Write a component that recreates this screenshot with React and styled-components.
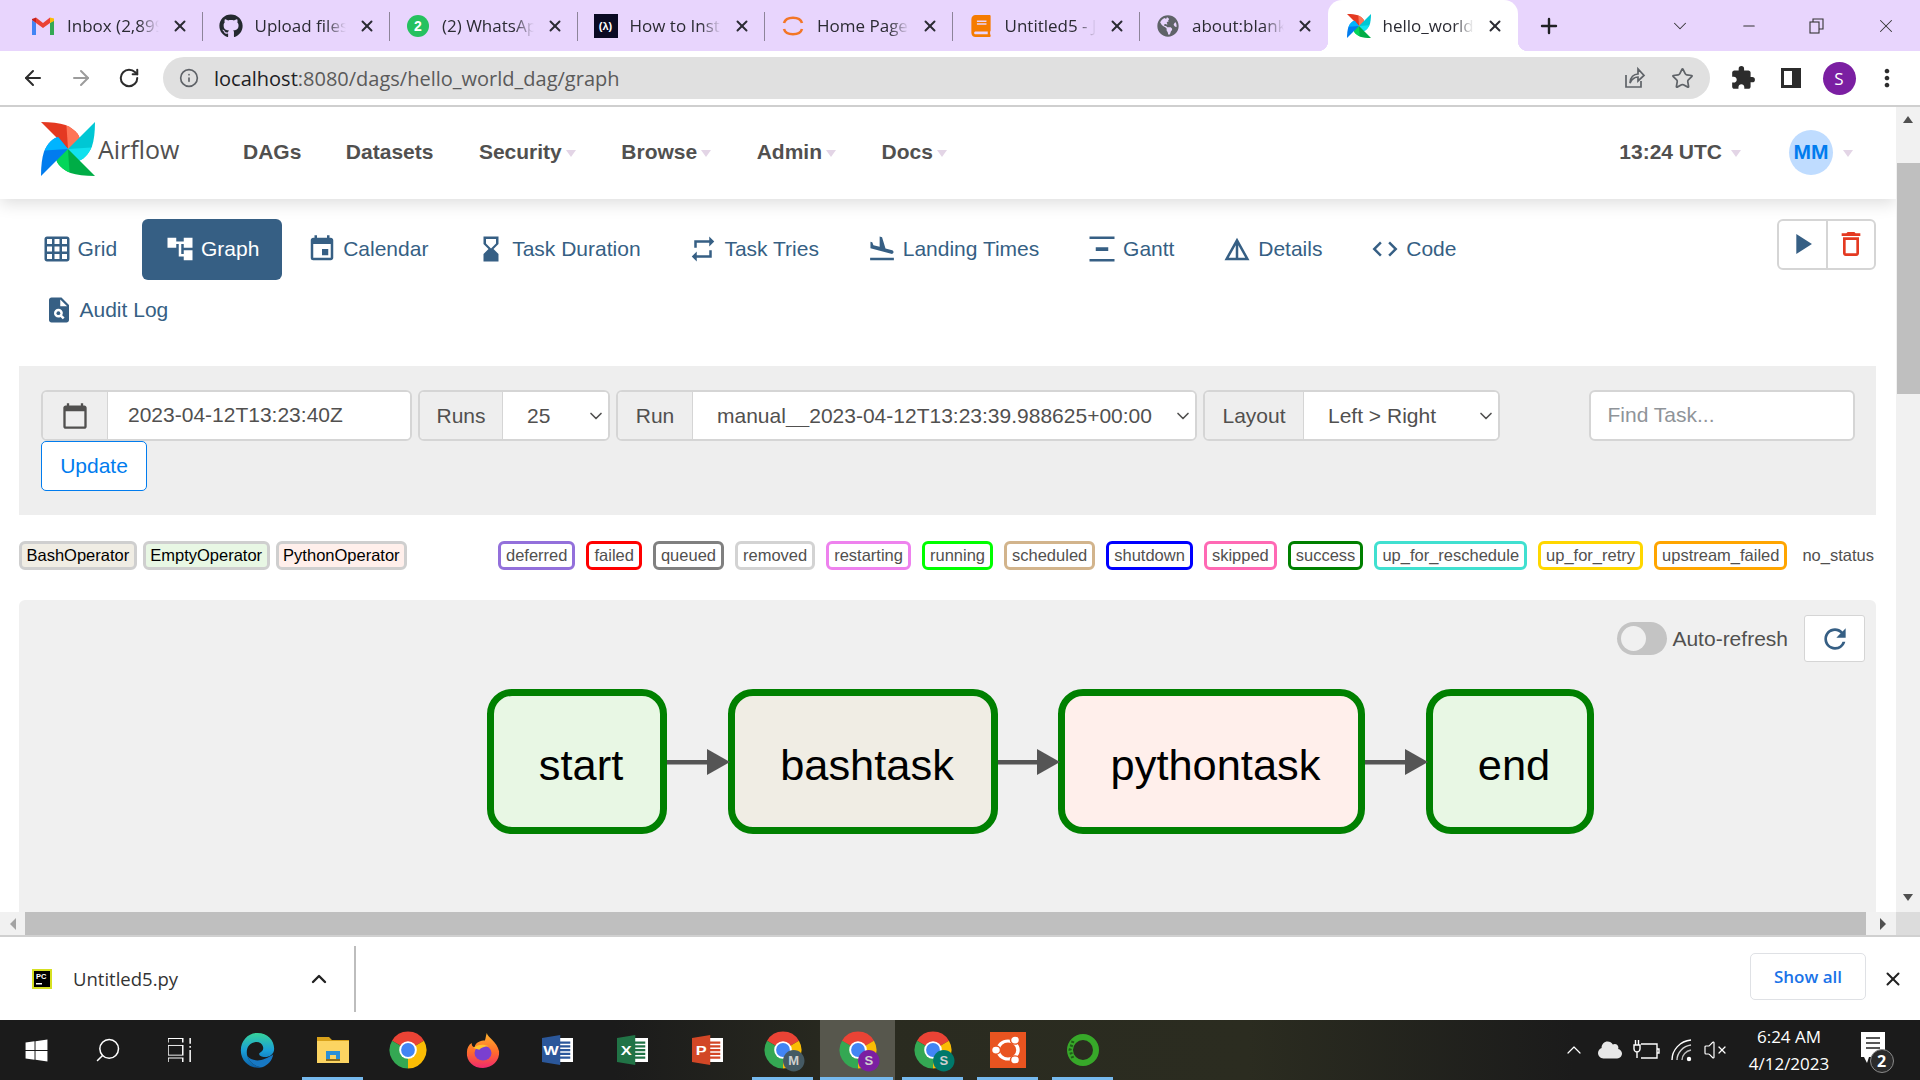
import React from 'react'
import styled, { createGlobalStyle } from 'styled-components'
import { ArrowLeft, ArrowRight, RotateCw, Info, Star, X, Plus, ChevronDown, ChevronUp, Minus, Search, VolumeX } from 'lucide-react'
import {
  MdGridOn, MdAccountTree, MdEvent, MdHourglassBottom, MdRepeat, MdFlightLand, MdVerticalDistribute,
  MdDetails, MdCode, MdPlagiarism, MdPlayArrow, MdDeleteOutline, MdRefresh, MdExtension, MdMoreVert, MdCalendarToday,
} from 'react-icons/md'
import { FaGithub, FaGlobeAmericas, FaWindows, FaBook, FaCloud } from 'react-icons/fa'

const Global = createGlobalStyle`
  * { box-sizing: border-box; }
  html, body { margin: 0; padding: 0; background: #fff; overflow: hidden; }
  body { font-family: "Liberation Sans", Arial, sans-serif; }
`

const Screen = styled.div`
  width: 1920px;
  height: 1080px;
  display: flex;
  flex-direction: column;
  overflow: hidden;
`

/* chrome tab strip */
const TabStrip = styled.div`
  height: 51px;
  flex: none;
  background: #e8d5fd;
  display: flex;
  align-items: stretch;
  padding-left: 15px;
`
const BrowserTab = styled.div`
  width: 187.5px;
  padding: 0 14px 0 16px;
  display: flex;
  align-items: center;
  gap: 12px;
  position: relative;
  color: #2b2b33;
  ${p => p.$active && `
    background: #fff;
    border-radius: 14px 14px 0 0;
    width: 190px;
    padding-left: 19px;
    &::before, &::after {
      content: '';
      position: absolute;
      bottom: 0;
      width: 10px;
      height: 10px;
    }
    &::before { left: -10px; background: radial-gradient(circle at 0 0, transparent 10px, #fff 10.5px); }
    &::after { right: -10px; background: radial-gradient(circle at 100% 0, transparent 10px, #fff 10.5px); }
  `}
  ${p => p.$sep && `
    &::after {
      content: '';
      position: absolute;
      right: 0;
      top: 12px;
      height: 29px;
      width: 1px;
      background: #8d8499;
    }
  `}
`
const FavSlot = styled.span`
  width: 24px;
  height: 24px;
  flex: none;
  display: flex;
  align-items: center;
  justify-content: center;
`
const TabTitle = styled.span`
  flex: 1;
  min-width: 0;
  white-space: nowrap;
  overflow: hidden;
  font: 400 17px "Open Sans", sans-serif;
  -webkit-mask-image: linear-gradient(90deg, #000 78%, transparent 100%);
  mask-image: linear-gradient(90deg, #000 78%, transparent 100%);
`
const NewTab = styled.div`
  width: 62px;
  display: flex;
  align-items: center;
  justify-content: center;
  color: #202124;
`
const WindowControls = styled.div`
  margin-left: auto;
  display: flex;
`
const WinBtn = styled.div`
  width: 68.5px;
  display: flex;
  align-items: center;
  justify-content: center;
  color: #333;
`
const WhatsBadge = styled.span`
  width: 22px;
  height: 22px;
  border-radius: 50%;
  background: #25c15f;
  color: #fff;
  font: 700 14px "Liberation Sans", sans-serif;
  display: flex;
  align-items: center;
  justify-content: center;
`
const CampBadge = styled.span`
  width: 24px;
  height: 24px;
  background: #0a0a23;
  color: #fff;
  font: 700 11px "Liberation Sans", sans-serif;
  display: flex;
  align-items: center;
  justify-content: center;
`

/* chrome toolbar */
const Toolbar = styled.div`
  height: 56px;
  flex: none;
  background: #fff;
  border-bottom: 2px solid #cfcfcf;
  display: flex;
  align-items: flex-start;
  padding: 6px 9px 0;
`
const ToolBtn = styled.div`
  width: 48px;
  height: 42px;
  flex: none;
  margin-left: ${p => p.$ml || 0}px;
  display: flex;
  align-items: center;
  justify-content: center;
  color: ${p => p.$dim ? '#9c9c9c' : '#2c2c2c'};
`
const Address = styled.div`
  width: 1547px;
  height: 42px;
  flex: none;
  margin: 0 0 0 10px;
  border-radius: 21px;
  background: #e0e0e0;
  display: flex;
  align-items: center;
  padding: 0 3px 0 16px;
  color: #5f6368;
`
const Url = styled.div`
  flex: 1;
  margin-left: 15px;
  font: 400 20px "Open Sans", sans-serif;
  color: #5a5a5a;
  white-space: nowrap;
  b { font-weight: 400; color: #202124; }
`
const AddrIcon = styled.span`
  width: 49px;
  display: flex;
  justify-content: center;
  color: #5f6368;
`
const ProfileDot = styled.span`
  width: 33px;
  height: 33px;
  border-radius: 50%;
  background: #7b1fa2;
  color: #fff;
  font: 400 17px "Open Sans", sans-serif;
  display: flex;
  align-items: center;
  justify-content: center;
`

/* viewport with scrollbars */
const ViewportRow = styled.div`
  height: 805px;
  flex: none;
  display: flex;
`
const Page = styled.div`
  width: 1896px;
  flex: none;
  display: flex;
  flex-direction: column;
  overflow: hidden;
  background: #fff;
`
const VScroll = styled.div`
  flex: 1;
  background: #f1f1f1;
  display: flex;
  flex-direction: column;
  align-items: center;
  position: relative;
`
const VThumb = styled.div`
  position: absolute;
  top: 56px;
  left: 1px;
  right: 0;
  height: 231px;
  background: #bfbfbf;
`
const ArrowBox = styled.div`
  height: 25px;
  width: 100%;
  display: flex;
  align-items: center;
  justify-content: center;
  margin-top: ${p => p.$bottom ? 'auto' : '0'};
  padding-bottom: ${p => p.$bottom ? 4 : 0}px;
`
const Tri = styled.span`
  width: 0;
  height: 0;
  ${p => p.$dir === 'up' && 'border-left: 5px solid transparent; border-right: 5px solid transparent; border-bottom: 7px solid #505050;'}
  ${p => p.$dir === 'down' && 'border-left: 5px solid transparent; border-right: 5px solid transparent; border-top: 7px solid #505050;'}
  ${p => p.$dir === 'left' && 'border-top: 6px solid transparent; border-bottom: 6px solid transparent; border-right: 6px solid #a3a3a3;'}
  ${p => p.$dir === 'right' && 'border-top: 6px solid transparent; border-bottom: 6px solid transparent; border-left: 6px solid #505050;'}
`
const HScroll = styled.div`
  height: 25px;
  flex: none;
  background: #f1f1f1;
  border-bottom: 2px solid #d0d0d0;
  display: flex;
`
const HArrow = styled.div`
  width: ${p => p.$w}px;
  padding-left: ${p => p.$pl || 0}px;
  display: flex;
  align-items: center;
  justify-content: center;
`
const HThumb = styled.div`
  width: 1841px;
  background: #bfbfbf;
`
const HCorner = styled.div`
  flex: 1;
  background: #dcdcdc;
`

/* airflow navbar */
const NavBar = styled.div`
  height: 92px;
  flex: none;
  padding: 0 0 2px 41px;
  display: flex;
  align-items: center;
  background: #fff;
  box-shadow: 0 4px 16px rgba(0, 0, 0, 0.14);
  position: relative;
`
const Brand = styled.div`
  display: flex;
  align-items: center;
  gap: 3px;
  width: 202px;
  margin-top: -6px;
  font: 400 25px "Open Sans", sans-serif;
  color: #51504f;
`
const NavItem = styled.div`
  font: 700 21px "Liberation Sans", sans-serif;
  color: #51504f;
  margin-right: ${p => p.$mr ?? 45.5}px;
  display: flex;
  align-items: center;
  gap: 4px;
`
const Caret = styled.span`
  width: 0;
  height: 0;
  margin-top: 3px;
  margin-left: ${p => p.$ml || 0}px;
  margin-right: ${p => p.$mr || 0}px;
  border-left: 5px solid transparent;
  border-right: 5px solid transparent;
  border-top: 7px solid #e3d5e6;
`
const NavRight = styled.div`
  margin-left: auto;
  display: flex;
  align-items: center;
`
const Avatar = styled.span`
  width: 44px;
  height: 45px;
  border-radius: 50%;
  background: #bfdcff;
  color: #017cee;
  font: 700 21px "Liberation Sans", sans-serif;
  display: flex;
  align-items: center;
  justify-content: center;
  margin-right: 10px;
`

/* view tabs */
const ViewRow = styled.div`
  flex: none;
  padding: 20px 20px 25px 18.5px;
  display: flex;
  justify-content: space-between;
  align-items: flex-start;
`
const ViewTabs = styled.div`
  width: 1600px;
  display: flex;
  flex-wrap: wrap;
  gap: 0 1.8px;
`
const ViewTab = styled.div`
  height: 61px;
  padding: 0 23px 2px;
  margin-left: ${p => p.$ml ?? 0}px;
  display: flex;
  align-items: center;
  gap: 6px;
  border-radius: 6px;
  font-size: 21px;
  color: ${p => p.$active ? '#fff' : '#365f84'};
  background: ${p => p.$active ? '#365f84' : 'transparent'};
  svg { width: 30px; height: 30px; flex: none; }
`
const ActionGroup = styled.div`
  width: 99px;
  height: 51px;
  display: flex;
  border: 2px solid #d5d5d5;
  border-radius: 6px;
`
const ActionBtn = styled.div`
  flex: 1;
  display: flex;
  align-items: center;
  justify-content: center;
  color: ${p => p.$danger ? '#e43921' : '#365f84'};
  & + & { border-left: 2px solid #d5d5d5; }
  padding-bottom: 2px;
`

/* filter panel */
const FilterPanel = styled.div`
  flex: none;
  margin: 0 20px 0 19px;
  height: 149px;
  padding: 24px 21.5px 24px 22px;
  background: #eeeeee;
  display: flex;
  justify-content: space-between;
  align-items: flex-start;
`
const FilterLeft = styled.div`
  display: flex;
  flex-direction: column;
  align-items: flex-start;
`
const Groups = styled.div`
  display: flex;
  gap: 6px;
`
const FieldGroup = styled.div`
  width: ${p => p.$w}px;
  height: 51px;
  display: flex;
  border: 2px solid #d5d5d5;
  border-radius: 6px;
  background: #fff;
  overflow: hidden;
`
const Addon = styled.div`
  width: ${p => p.$w}px;
  flex: none;
  display: flex;
  align-items: center;
  justify-content: center;
  background: #eeeeee;
  border-right: 1px solid #d5d5d5;
  font-size: 21px;
  color: #51504f;
`
const DateInput = styled.input`
  flex: 1;
  min-width: 0;
  border: none;
  outline: none;
  padding: 0 0 2px 20px;
  font: 400 21px "Liberation Sans", sans-serif;
  color: #51504f;
  background: #fff;
`
const SelectBox = styled.div`
  flex: 1;
  min-width: 0;
  position: relative;
  display: flex;
  color: #51504f;
  svg {
    position: absolute;
    right: 2px;
    top: 14px;
    pointer-events: none;
  }
`
const Select = styled.select`
  flex: 1;
  min-width: 0;
  appearance: none;
  border: none;
  outline: none;
  padding: 0 0 0 ${p => p.$pl}px;
  font: 400 21px "Liberation Sans", sans-serif;
  color: #51504f;
  background: #fff;
`
const UpdateBtn = styled.button`
  width: 106px;
  height: 50px;
  background: #fff;
  border: 1.5px solid #017cee;
  border-radius: 5px;
  color: #017cee;
  font: 400 21px "Liberation Sans", sans-serif;
`
const FindInput = styled.input`
  width: 266px;
  height: 51px;
  border: 2px solid #d5d5d5;
  border-radius: 6px;
  outline: none;
  padding: 0 0 2px 17px;
  font: 400 21px "Liberation Sans", sans-serif;
  background: #fff;
  &::placeholder { color: #8f9499; opacity: 1; }
`

/* legend */
const Legend = styled.div`
  flex: none;
  height: 85px;
  margin: 0 14px 0 19px;
  padding-top: 26px;
  display: flex;
  justify-content: space-between;
  align-items: flex-start;
`
const LegendGroup = styled.div`
  display: flex;
  align-items: center;
  gap: ${p => p.$gap}px;
`
const Label = styled.span`
  height: 29px;
  padding: 0 ${p => p.$dark ? 4.5 : 5}px;
  display: flex;
  align-items: center;
  border: 3px solid ${p => p.$border || 'transparent'};
  border-radius: 6px;
  background: ${p => p.$bg || '#fff'};
  color: ${p => p.$dark ? '#000' : '#51504f'};
  font-size: 16.5px;
  line-height: 1;
  white-space: nowrap;
`
const NoStatus = styled(Label)`
  margin-left: -4px;
`

/* graph panel */
const GraphPanel = styled.div`
  flex: 1;
  margin: 0 20px 0 19px;
  background: #f0f0f0;
  border-radius: 6px 6px 0 0;
  display: flex;
  flex-direction: column;
  overflow: hidden;
`
const GraphHead = styled.div`
  height: 62px;
  padding: 15px 11px 0 0;
  display: flex;
  justify-content: flex-end;
  align-items: center;
`
const Toggle = styled.div`
  width: 50px;
  height: 33px;
  border-radius: 17px;
  background: #c4c4c4;
  padding: 4px;
  margin-right: 5px;
  span {
    display: block;
    width: 25px;
    height: 25px;
    border-radius: 50%;
    background: #f0f0f0;
  }
`
const AutoLabel = styled.div`
  font-size: 21px;
  color: #51504f;
  margin-right: 16px;
`
const RefreshBtn = styled.div`
  width: 61px;
  height: 47px;
  background: #fff;
  border: 1.5px solid #d5d5d5;
  border-radius: 3px;
  display: flex;
  align-items: center;
  justify-content: center;
  color: #365f84;
`
const Dag = styled.div`
  margin-top: 27px;
  padding-left: 468px;
  display: flex;
  align-items: stretch;
`
const TaskNode = styled.div`
  width: ${p => p.$w}px;
  height: 145px;
  flex: none;
  border: 7px solid #008000;
  border-radius: 25px;
  background: ${p => p.$bg};
  color: #000;
  font-size: 43.4px;
  display: flex;
  align-items: center;
  justify-content: center;
  padding: 8px 0 0 8px;
`
const EdgeSvg = styled.svg`
  flex: none;
  overflow: visible;
  z-index: 1;
`

/* download shelf */
const Shelf = styled.div`
  height: 83px;
  flex: none;
  background: #fff;
  display: flex;
  align-items: center;
  padding-left: 32px;
`
const DownloadName = styled.div`
  font: 400 18.5px "Open Sans", sans-serif;
  color: #333;
  margin-left: 21px;
  width: 244px;
`
const ShelfChevron = styled.div`
  width: 47px;
  margin-left: -10px;
  display: flex;
  color: #222;
`
const ShelfSep = styled.div`
  width: 2px;
  height: 66px;
  background: #bdbdbd;
`
const ShowAll = styled.div`
  margin-left: auto;
  width: 116px;
  height: 47px;
  margin-top: -4px;
  border: 1.5px solid #dfe1e5;
  border-radius: 5px;
  display: flex;
  align-items: center;
  justify-content: center;
  color: #1a73e8;
  font: 600 17px "Open Sans", sans-serif;
`
const ShelfClose = styled.div`
  width: 54px;
  display: flex;
  justify-content: center;
  color: #222;
`

/* windows taskbar */
const Taskbar = styled.div`
  height: 60px;
  flex: none;
  display: flex;
  align-items: stretch;
  color: #fff;
  background: linear-gradient(90deg, #1b1b1b 0, #1b1b1b 32%, #2a2b20 45%, #2b2c20 65%, #1b1b1b 82%);
`
const TaskCell = styled.div`
  width: ${p => p.$w || 75}px;
  margin-left: ${p => p.$ml || 0}px;
  flex: none;
  display: flex;
  align-items: center;
  justify-content: center;
  position: relative;
  background: ${p => p.$active ? '#57574d' : 'transparent'};
  &::after {
    content: '';
    display: ${p => p.$run ? 'block' : 'none'};
    position: absolute;
    bottom: 0;
    height: 3px;
    left: ${p => p.$active ? 0 : 7}px;
    right: ${p => p.$active ? 2 : 7}px;
    background: #76b9ed;
  }
`
const Tray = styled.div`
  margin-left: auto;
  display: flex;
  align-items: center;
  padding-right: 25.5px;
`
const TrayIcon = styled.span`
  width: ${p => p.$w || 36}px;
  display: flex;
  justify-content: center;
  align-items: center;
`
const Clock = styled.div`
  width: 104px;
  margin-left: 7px;
  text-align: center;
  font: 400 17px/27px "Open Sans", sans-serif;
`
const Notice = styled.div`
  width: 44px;
  margin-left: 9.5px;
  height: 50px;
  position: relative;
  display: flex;
  align-items: center;
  justify-content: center;
`
const NoticeBadge = styled.span`
  position: absolute;
  right: 1px;
  bottom: 2px;
  width: 24px;
  height: 24px;
  border-radius: 50%;
  background: #2b2b2b;
  border: 1px solid #8a8a8a;
  color: #fff;
  font: 700 16px "Open Sans", sans-serif;
  display: flex;
  align-items: center;
  justify-content: center;
`

function Pinwheel({ size }) {
  const blade = 'M26.5 26.5 L0 0 C10 0 18 1 24 3 C31 6 38 12 38 17 Z'
  const light = 'M26.5 26.5 L25 3.5 C31 6 38 12 38 17 Z'
  const colors = [['#e43921', '#ff7557', 0], ['#00c7d4', '#11e1ee', 90], ['#00ad46', '#04d659', 180], ['#017cee', '#00b4ff', 270]]
  return (
    <svg width={size} height={size} viewBox="0 0 53 53">
      {colors.map(([a, b, r]) => (
        <g key={r} transform={`rotate(${r} 26.5 26.5)`}>
          <path d={blade} fill={a} />
          <path d={light} fill={b} />
        </g>
      ))}
    </svg>
  )
}

function Gmail() {
  return (
    <svg width="24" height="20" viewBox="0 0 24 20">
      <path d="M1 19V4l4 3v12z" fill="#4285f4" />
      <path d="M19 19V7l4-3v15z" fill="#34a853" />
      <path d="M19 7V1.5l4 1V5z" fill="#fbbc04" />
      <path d="M5 7 12 12l7-5V1.5L12 7 5 1.5z" fill="#ea4335" />
      <path d="M1 4V3l4-1.5V7z" fill="#c5221f" />
    </svg>
  )
}

function Jupyter() {
  return (
    <svg width="24" height="24" viewBox="0 0 24 24" fill="none" stroke="#f37626" strokeWidth="2.6">
      <path d="M3 9C5 2 19 2 21 9" />
      <path d="M3 15C5 22 19 22 21 15" />
    </svg>
  )
}

function ChromeLogo({ badge, badgeColor }) {
  const slice = 'M24 24 L3.2 12 A24 24 0 0 1 44.8 12 Z'
  return (
    <svg width="46" height="46" viewBox="-6 -6 60 60">
      <path d={slice} fill="#ea4335" />
      <path d={slice} fill="#fbbc04" transform="rotate(120 24 24)" />
      <path d={slice} fill="#34a853" transform="rotate(240 24 24)" />
      <circle cx="24" cy="24" r="11.5" fill="#fff" />
      <circle cx="24" cy="24" r="9" fill="#4285f4" />
      {badge && <circle cx="38" cy="38" r="14" fill={badgeColor} />}
      {badge && <text x="38" y="44" textAnchor="middle" fontSize="17" fontFamily="Liberation Sans" fontWeight="700" fill="#cfcfcf">{badge}</text>}
    </svg>
  )
}

function Edge() {
  return (
    <svg width="37" height="37" viewBox="0 0 40 40">
      <defs>
        <linearGradient id="edgeA" x1="0" y1="0" x2="0" y2="1">
          <stop offset="0" stopColor="#37d399" />
          <stop offset="0.5" stopColor="#1a9fd8" />
          <stop offset="1" stopColor="#0b5fa8" />
        </linearGradient>
      </defs>
      <path d="M20 1C31 1 38 9 38 18C38 24 33 27 28 27C24 27 21 25 22 23C24 21 27 20 26 16C25 12 21 10 17 11C10 12 7 19 9 26C11 33 18 38 25 38C14 41 2 33 2 20C2 9 10 1 20 1Z" fill="url(#edgeA)" />
      <path d="M25 38C18 38 11 33 9 26C13 31 21 32 28 29C32 27 35 26 37 24C36 31 31 36 25 38Z" fill="#1778c4" />
    </svg>
  )
}

function Folder() {
  return (
    <svg width="32" height="26" viewBox="0 0 32 26">
      <path d="M0 0H12L15 3H32V26H0Z" fill="#d9a21b" />
      <rect y="4" width="32" height="22" fill="#fcd462" />
      <path d="M9 22V14H23V22H19V18H13V22Z" fill="#2a8fd6" />
      <rect x="9" y="22" width="14" height="2" fill="#8a6a18" />
    </svg>
  )
}

function Firefox() {
  return (
    <svg width="34" height="35" viewBox="0 0 36 42" preserveAspectRatio="none">
      <defs>
        <linearGradient id="foxA" x1="0" y1="0" x2="0" y2="1">
          <stop offset="0" stopColor="#ffb32c" />
          <stop offset="0.55" stopColor="#ff6b2c" />
          <stop offset="1" stopColor="#f0286f" />
        </linearGradient>
      </defs>
      <path d="M22 0C23 6 33 10 35 22C36 33 28 42 18 42C8 42 0 34 1 23C1 18 3 14 6 12C6 15 7 17 9 17C10 11 16 9 20 9C21 6 21 3 22 0Z" fill="url(#foxA)" />
      <circle cx="18" cy="24" r="9" fill="#7a3fd0" />
      <path d="M8 18C12 13 20 13 24 16C20 16 16 18 14 20Z" fill="#ffc42d" />
    </svg>
  )
}

function OfficeApp({ letter, cover, sheet }) {
  return (
    <svg width="31" height="30" viewBox="0 0 34 40" preserveAspectRatio="none">
      <rect x="14" y="4" width="20" height="32" fill="#fff" />
      <path d="M17 10H31M17 15H31M17 20H31M17 25H31M17 30H31" stroke={sheet} strokeWidth="3" />
      <path d="M0 4 20 0V40L0 36Z" fill={cover} />
      <text x="10" y="27" textAnchor="middle" fontSize="18" fontWeight="700" fontFamily="Liberation Sans" fill="#fff">{letter}</text>
    </svg>
  )
}

function Ubuntu() {
  return (
    <svg width="36" height="36" viewBox="0 0 36 40" preserveAspectRatio="none">
      <rect width="36" height="40" fill="#e95420" />
      <circle cx="18" cy="20" r="10" fill="none" stroke="#fff" strokeWidth="3.5" />
      <circle cx="25" cy="9" r="4.5" fill="#fff" stroke="#e95420" strokeWidth="1.5" />
      <circle cx="6" cy="20" r="4.5" fill="#fff" stroke="#e95420" strokeWidth="1.5" />
      <circle cx="25" cy="31" r="4.5" fill="#fff" stroke="#e95420" strokeWidth="1.5" />
    </svg>
  )
}

function GreenRing() {
  return (
    <svg width="32" height="32" viewBox="0 0 32 32" fill="none">
      <circle cx="16" cy="16" r="13" stroke="#37a829" strokeWidth="6" />
      <path d="M6 7 3 16l3 9" stroke="#1f5e18" strokeWidth="3" strokeDasharray="2 2" />
    </svg>
  )
}

function PyCharm() {
  return (
    <svg width="20" height="20" viewBox="0 0 20 20">
      <rect width="20" height="20" fill="#d6e021" />
      <rect x="2" y="2" width="16" height="16" fill="#000" />
      <text x="4" y="10" fontSize="7.5" fontWeight="700" fontFamily="Liberation Sans" fill="#fff">PC</text>
      <rect x="4" y="14" width="6" height="1.5" fill="#fff" />
    </svg>
  )
}

function ShareIcon() {
  return (
    <svg width="24" height="24" viewBox="0 0 24 24" fill="none" stroke="#5f6368" strokeWidth="1.7">
      <path d="M4 9V21H19V15" />
      <path d="M8 17C8 11 12 8 16 8V3L22 9.5 16 15V11C12 11 10 13 8 17Z" />
    </svg>
  )
}

function SidePanel() {
  return (
    <svg width="22" height="22" viewBox="0 0 22 22">
      <path d="M1 1H21V21H1Z M4 4V18H12V4Z" fill="#2c2c2c" fillRule="evenodd" />
    </svg>
  )
}

function RestoreIcon() {
  return (
    <svg width="16" height="16" viewBox="0 0 16 16" fill="none" stroke="#333" strokeWidth="1.1">
      <rect x="1" y="4" width="9" height="11" />
      <path d="M4 4V1H14V11H10" />
    </svg>
  )
}

function TaskView() {
  return (
    <svg width="24" height="24" viewBox="0 0 26 42" fill="none" stroke="#fff" strokeWidth="1.6" preserveAspectRatio="none">
      <path d="M0 8V1H16V8" />
      <rect x="0" y="13" width="16" height="17" />
      <path d="M0 42V35H16V42" />
      <path d="M24 0V10M24 14V17M24 21V42" />
    </svg>
  )
}

function WifiIcon() {
  return (
    <svg width="24" height="24" viewBox="0 0 24 24" fill="none" stroke="#fff" strokeWidth="1.4">
      <path d="M2 22C2 12 10 3 21 2" />
      <path d="M7 22C7 15 13 8 21 7" opacity="0.8" />
      <path d="M12 22C12 17 16 13 21 12" opacity="0.7" />
      <circle cx="19" cy="21" r="1.5" fill="#fff" />
    </svg>
  )
}

function PlugIcon() {
  return (
    <svg width="28" height="24" viewBox="0 0 28 24" fill="none" stroke="#fff" strokeWidth="1.4">
      <path d="M9 6H25V20H9" />
      <path d="M25 11H27V15H25" />
      <path d="M2 7H8V11C8 13 6 14 5 14C4 14 2 13 2 11ZM3.5 7V2M6.5 7V2M5 14V20" />
    </svg>
  )
}

function NoticeIcon() {
  return (
    <svg width="24" height="36" viewBox="0 0 24 36">
      <path d="M0 0H24V25H8L6 31 3 25H0Z" fill="#fff" />
      <path d="M5 6H19M5 11H19M5 16H19" stroke="#222" strokeWidth="1.6" />
    </svg>
  )
}

const browserTabs = [
  { title: 'Inbox (2,899)', fav: <Gmail /> },
  { title: 'Upload files', fav: <FaGithub size={24} color="#24292f" /> },
  { title: '(2) WhatsApp', fav: <WhatsBadge>2</WhatsBadge> },
  { title: 'How to Install', fav: <CampBadge>(λ)</CampBadge> },
  { title: 'Home Page', fav: <Jupyter /> },
  { title: 'Untitled5 - Jup', fav: <FaBook size={22} color="#f57c00" /> },
  { title: 'about:blank', fav: <FaGlobeAmericas size={22} color="#5f6368" /> },
]

const viewTabs = [
  ['Grid', MdGridOn],
  ['Graph', MdAccountTree, true],
  ['Calendar', MdEvent],
  ['Task Duration', MdHourglassBottom],
  ['Task Tries', MdRepeat],
  ['Landing Times', MdFlightLand],
  ['Gantt', MdVerticalDistribute],
  ['Details', MdDetails],
  ['Code', MdCode],
]

const operators = [
  ['BashOperator', '#f0ede4'],
  ['EmptyOperator', '#e8f7e4'],
  ['PythonOperator', '#ffefeb'],
]

const states = [
  ['deferred', 'mediumpurple'],
  ['failed', 'red'],
  ['queued', 'gray'],
  ['removed', 'lightgrey'],
  ['restarting', 'violet'],
  ['running', 'lime'],
  ['scheduled', 'tan'],
  ['shutdown', 'blue'],
  ['skipped', 'hotpink'],
  ['success', 'green'],
  ['up_for_reschedule', 'turquoise'],
  ['up_for_retry', 'gold'],
  ['upstream_failed', 'orange'],
]

function EdgeArrow({ w }) {
  return (
    <EdgeSvg width={w} height="145" viewBox={`0 0 ${w} 145`}>
      <rect x="0" y="71" width={w - 20} height="4.5" fill="#555" />
      <polygon points={`${w - 21},60 ${w + 2},73 ${w - 21},86`} fill="#555" />
    </EdgeSvg>
  )
}

function RunSelect({ value }) {
  return (
    <SelectBox>
      <Select $pl={24} defaultValue={value}><option>{value}</option></Select>
      <ChevronDown size={20} strokeWidth={2} />
    </SelectBox>
  )
}

export default function App() {
  return (
    <Screen>
      <Global />
      <TabStrip>
        {browserTabs.map((t, i) => (
          <BrowserTab key={t.title} $sep={i < 6}>
            <FavSlot>{t.fav}</FavSlot>
            <TabTitle>{t.title}</TabTitle>
            <X size={18} strokeWidth={2.6} />
          </BrowserTab>
        ))}
        <BrowserTab $active>
          <FavSlot><Pinwheel size={24} /></FavSlot>
          <TabTitle>hello_world_dag</TabTitle>
          <X size={18} strokeWidth={2.6} />
        </BrowserTab>
        <NewTab><Plus size={24} strokeWidth={2.4} /></NewTab>
        <WindowControls>
          <WinBtn><ChevronDown size={22} strokeWidth={1.1} /></WinBtn>
          <WinBtn><Minus size={18} strokeWidth={1.4} /></WinBtn>
          <WinBtn><RestoreIcon /></WinBtn>
          <WinBtn><X size={22} strokeWidth={1.1} /></WinBtn>
        </WindowControls>
      </TabStrip>

      <Toolbar>
        <ToolBtn><ArrowLeft size={24} strokeWidth={2} /></ToolBtn>
        <ToolBtn $dim><ArrowRight size={24} strokeWidth={2} /></ToolBtn>
        <ToolBtn><RotateCw size={22} strokeWidth={2.2} /></ToolBtn>
        <Address>
          <Info size={20} />
          <Url><b>localhost</b>:8080/dags/hello_world_dag/graph</Url>
          <AddrIcon><ShareIcon /></AddrIcon>
          <AddrIcon><Star size={23} strokeWidth={1.8} /></AddrIcon>
        </Address>
        <ToolBtn $ml={9}><MdExtension size={26} /></ToolBtn>
        <ToolBtn><SidePanel /></ToolBtn>
        <ToolBtn><ProfileDot>S</ProfileDot></ToolBtn>
        <ToolBtn><MdMoreVert size={28} /></ToolBtn>
      </Toolbar>

      <ViewportRow>
        <Page>
          <NavBar>
            <Brand><Pinwheel size={54} /><span>Airflow</span></Brand>
            <NavItem $mr={44.5}>DAGs</NavItem>
            <NavItem>Datasets</NavItem>
            <NavItem>Security<Caret /></NavItem>
            <NavItem>Browse<Caret /></NavItem>
            <NavItem>Admin<Caret /></NavItem>
            <NavItem>Docs<Caret /></NavItem>
            <NavRight>
              <NavItem $mr={48}>13:24 UTC<Caret $ml={5} /></NavItem>
              <Avatar>MM</Avatar>
              <Caret $mr={43} />
            </NavRight>
          </NavBar>

          <ViewRow>
            <ViewTabs>
              {viewTabs.map(([name, Icon, active]) => (
                <ViewTab key={name} $active={active}><Icon />{name}</ViewTab>
              ))}
              <ViewTab $ml={2}><MdPlagiarism />Audit Log</ViewTab>
            </ViewTabs>
            <ActionGroup>
              <ActionBtn><MdPlayArrow size={34} /></ActionBtn>
              <ActionBtn $danger><MdDeleteOutline size={32} /></ActionBtn>
            </ActionGroup>
          </ViewRow>

          <FilterPanel>
            <FilterLeft>
              <Groups>
                <FieldGroup $w={371}>
                  <Addon $w={65}><MdCalendarToday size={28} /></Addon>
                  <DateInput defaultValue="2023-04-12T13:23:40Z" />
                </FieldGroup>
                <FieldGroup $w={192}>
                  <Addon $w={83}>Runs</Addon>
                  <RunSelect value="25" />
                </FieldGroup>
                <FieldGroup $w={581}>
                  <Addon $w={75}>Run</Addon>
                  <RunSelect value="manual__2023-04-12T13:23:39.988625+00:00" />
                </FieldGroup>
                <FieldGroup $w={297}>
                  <Addon $w={99}>Layout</Addon>
                  <RunSelect value="Left > Right" />
                </FieldGroup>
              </Groups>
              <UpdateBtn>Update</UpdateBtn>
            </FilterLeft>
            <FindInput placeholder="Find Task..." />
          </FilterPanel>

          <Legend>
            <LegendGroup $gap={6}>
              {operators.map(([name, bg]) => (
                <Label key={name} $dark $border="#cfcfcf" $bg={bg}>{name}</Label>
              ))}
            </LegendGroup>
            <LegendGroup $gap={11}>
              {states.map(([name, color]) => (
                <Label key={name} $border={color}>{name}</Label>
              ))}
              <NoStatus>no_status</NoStatus>
            </LegendGroup>
          </Legend>

          <GraphPanel>
            <GraphHead>
              <Toggle><span /></Toggle>
              <AutoLabel>Auto-refresh</AutoLabel>
              <RefreshBtn><MdRefresh size={32} /></RefreshBtn>
            </GraphHead>
            <Dag>
              <TaskNode $w={180} $bg="#e8f7e4">start</TaskNode>
              <EdgeArrow w={61} />
              <TaskNode $w={270} $bg="#f0ede4">bashtask</TaskNode>
              <EdgeArrow w={60} />
              <TaskNode $w={307} $bg="#ffefeb">pythontask</TaskNode>
              <EdgeArrow w={61} />
              <TaskNode $w={168} $bg="#e8f7e4">end</TaskNode>
            </Dag>
          </GraphPanel>
        </Page>
        <VScroll>
          <ArrowBox><Tri $dir="up" /></ArrowBox>
          <VThumb />
          <ArrowBox $bottom><Tri $dir="down" /></ArrowBox>
        </VScroll>
      </ViewportRow>

      <HScroll>
        <HArrow $w={25}><Tri $dir="left" /></HArrow>
        <HThumb />
        <HArrow $w={30} $pl={4}><Tri $dir="right" /></HArrow>
        <HCorner />
      </HScroll>

      <Shelf>
        <PyCharm />
        <DownloadName>Untitled5.py</DownloadName>
        <ShelfChevron><ChevronUp size={24} strokeWidth={2.4} /></ShelfChevron>
        <ShelfSep />
        <ShowAll>Show all</ShowAll>
        <ShelfClose><X size={22} strokeWidth={2.2} /></ShelfClose>
      </Shelf>

      <Taskbar>
        <TaskCell $w={72}><FaWindows size={25} /></TaskCell>
        <TaskCell $w={72}><Search size={28} strokeWidth={1.3} style={{ transform: 'scaleX(-1)' }} /></TaskCell>
        <TaskCell $w={72}><TaskView /></TaskCell>
        <TaskCell $ml={4}><Edge /></TaskCell>
        <TaskCell $run><Folder /></TaskCell>
        <TaskCell><ChromeLogo /></TaskCell>
        <TaskCell><Firefox /></TaskCell>
        <TaskCell><OfficeApp letter="W" cover="#2b579a" sheet="#2b579a" /></TaskCell>
        <TaskCell><OfficeApp letter="X" cover="#217346" sheet="#217346" /></TaskCell>
        <TaskCell><OfficeApp letter="P" cover="#d24726" sheet="#d24726" /></TaskCell>
        <TaskCell $run><ChromeLogo badge="M" badgeColor="#455a64" /></TaskCell>
        <TaskCell $run $active><ChromeLogo badge="S" badgeColor="#7b1fa2" /></TaskCell>
        <TaskCell $run><ChromeLogo badge="S" badgeColor="#00796b" /></TaskCell>
        <TaskCell $run><Ubuntu /></TaskCell>
        <TaskCell $run><GreenRing /></TaskCell>
        <Tray>
          <TrayIcon><ChevronUp size={24} strokeWidth={1.2} /></TrayIcon>
          <TrayIcon><FaCloud size={24} color="#e8e8e8" /></TrayIcon>
          <TrayIcon><PlugIcon /></TrayIcon>
          <TrayIcon><WifiIcon /></TrayIcon>
          <TrayIcon $w={30}><VolumeX size={24} strokeWidth={1.2} /></TrayIcon>
          <Clock>6:24 AM<br />4/12/2023</Clock>
          <Notice><NoticeIcon /><NoticeBadge>2</NoticeBadge></Notice>
        </Tray>
      </Taskbar>
    </Screen>
  )
}
